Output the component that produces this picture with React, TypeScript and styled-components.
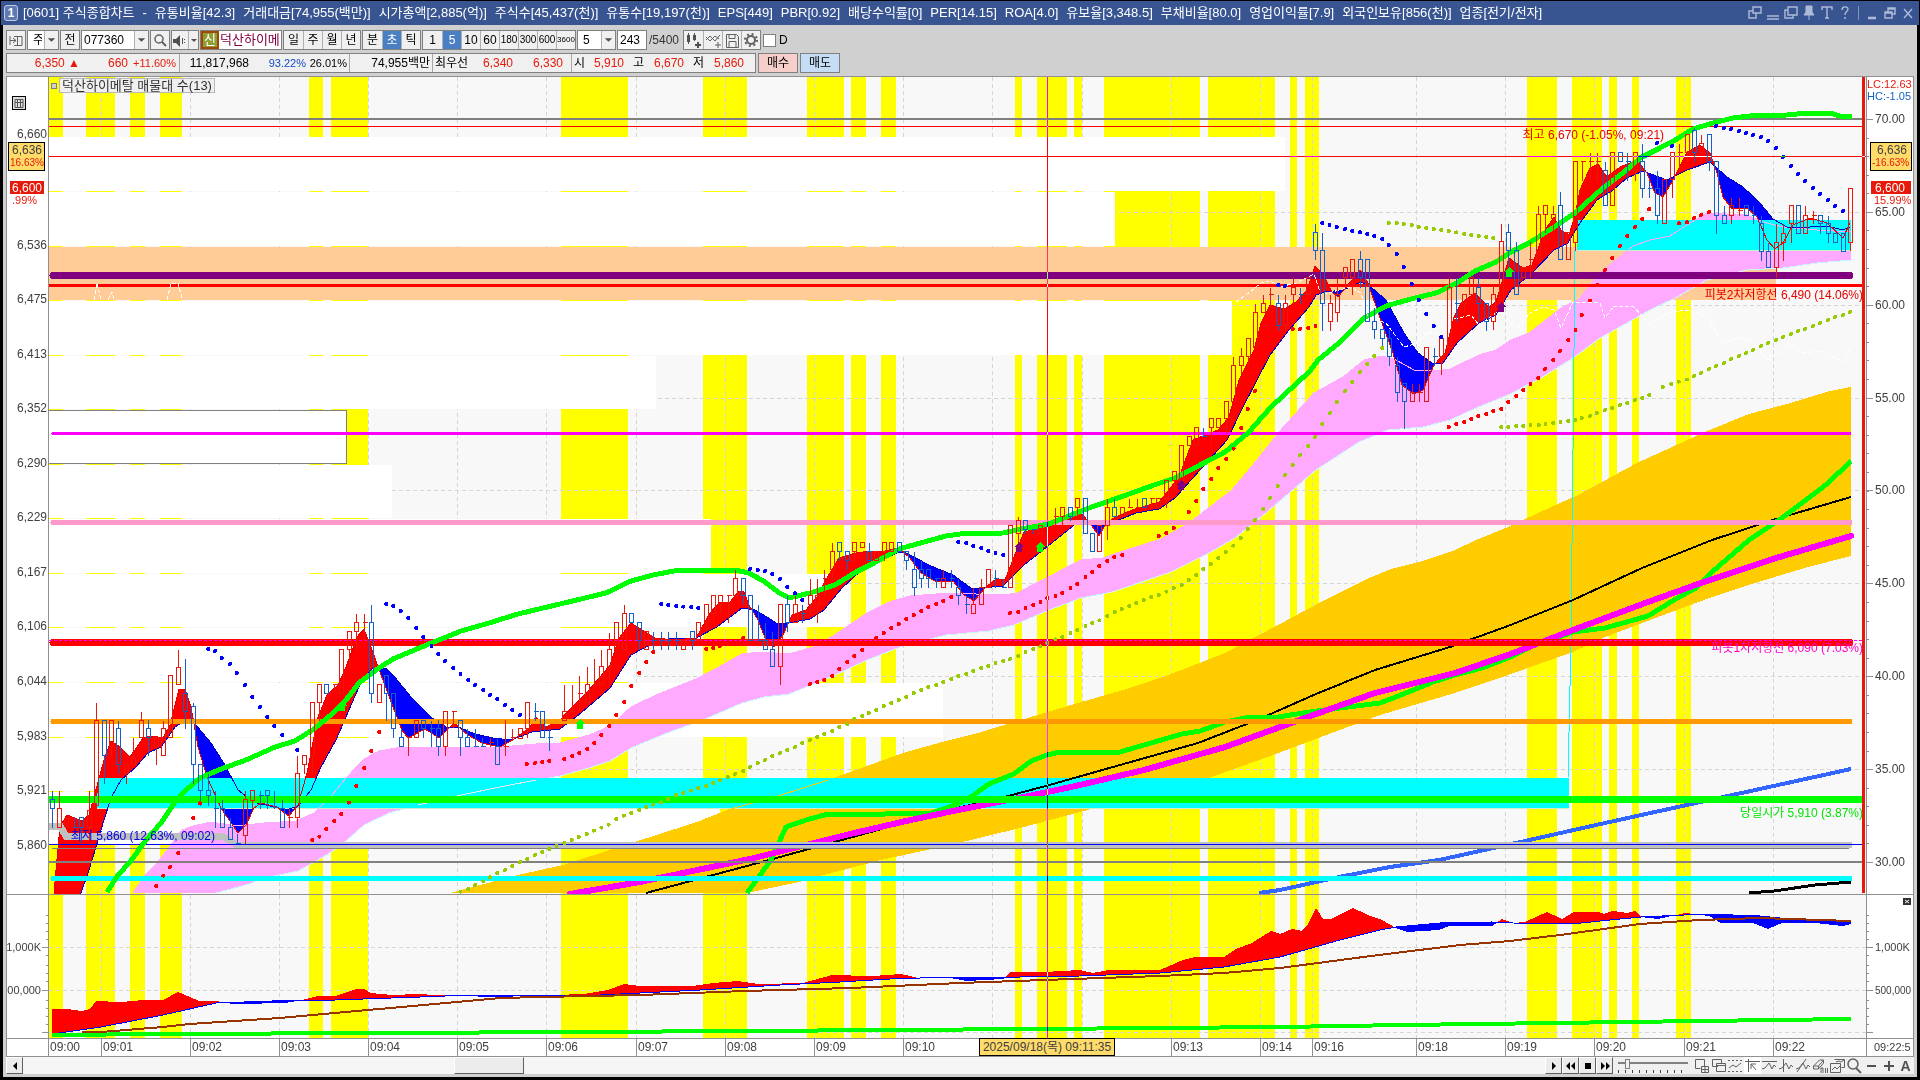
import React from "react";
import styled, { createGlobalStyle } from "styled-components";

const FONT = '"Liberation Sans", "Noto Sans CJK KR", sans-serif';

const GlobalStyle = createGlobalStyle`
  * { box-sizing: border-box; }
  body { margin: 0; background: #000; font-family: ${FONT}; font-size: 12px; color: #000; }
  button, input, select { font-family: inherit; font-size: inherit; color: inherit; margin: 0; }
`;

/* ---------- series data ---------- */

type Pt = [number, number];
const pairs = (s: string): Pt[] =>
  s.trim().split(/\s+/).map((p) => p.split(",").map(Number) as Pt);
const poly = (s: string) => s.trim();

const STRIPES: Pt[] = pairs(`49,63 86,115 130,145 160,182 309,323 331,368 561,628 703,747 807,844 851,866
  881,896 1015,1022 1037,1067 1074,1082 1104,1200 1208,1275 1290,1297 1305,1319 1527,1557 1572,1602
  1609,1617 1632,1639 1676,1691`);
const MINUTES = [101, 190, 279, 368, 457, 546, 636, 725, 814, 903, 992, 1082, 1171, 1260, 1312, 1416, 1505, 1594, 1684, 1773];
const LEVELS = [119, 212, 305, 398, 490, 583, 676, 769, 862];

/* volume profile rows: top, bottom, right edge */
const PROFILE = [
  [137, 191, 1285], [192, 246, 1115], [301, 355, 1232], [356, 409, 656], [465, 518, 392],
  [519, 573, 711], [574, 627, 848], [628, 682, 633], [683, 737, 943], [738, 791, 518], [792, 845, 720],
];

const UPPER_GREEN = `107,892 118,875 130,862 146,840 161,823 175,802 186,790 200,778 221,769 246,760 275,747 295,741
 314,729 332,714 346,700 359,683 379,668 393,659 429,644 461,631 489,623 518,614 560,604 585,598 606,593 631,581
 653,575 674,571 703,570 735,570 749,573 765,582 778,592 789,598 810,593 835,585 856,572 874,563 899,549 924,542
 946,536 960,534 1003,533 1021,529 1049,524 1074,514 1089,508 1129,494 1154,485 1175,478 1204,463 1225,452
 1248,433 1271,407 1309,372 1318,360 1339,343 1364,318 1386,306 1411,299 1436,293 1457,283 1475,271 1496,262
 1511,252 1529,243 1554,227 1575,213 1603,188 1623,173 1640,158 1660,148 1677,139 1693,129 1713,123 1733,118
 1750,116 1787,115 1807,113 1830,113 1840,116 1852,117`;
const LOWER_GREEN = `747,893 771,860 786,827 806,820 828,814 861,815 910,813 931,813 953,806 971,797 989,784 1014,774
 1031,761 1047,755 1060,752 1120,752 1144,745 1182,734 1200,731 1225,722 1251,717 1278,717 1310,712 1348,707
 1380,703 1401,695 1433,682 1455,675 1482,668 1508,658 1535,645 1573,632 1605,628 1648,616 1674,600 1696,588
 1712,572 1749,540 1782,518 1827,484 1851,461`;
const GOLD = `450,893 518,875 563,865 703,820 731,809 778,796 828,780 864,767 903,753 942,742 978,733 1024,719 1071,705
 1123,690 1171,674 1225,653 1278,625 1321,602 1369,578 1391,569 1423,561 1455,550 1476,540 1508,527 1551,507
 1578,495 1637,463 1707,431 1749,414 1787,404 1830,391 1851,387 1851,556 1808,567 1755,583 1712,597 1658,617
 1605,637 1573,652 1508,675 1455,693 1380,715 1321,737 1273,755 1209,778 1144,795 1080,812 1020,828 950,845
 881,860 820,876 799,882 747,893`;
const PINK_TOP = `133,893 145,875 157,863 182,830 193,826 211,822 236,826 264,823 296,821 314,813 332,795 346,778
 364,759 379,751 396,748 446,747 500,747 536,744 560,743 589,735 610,726 631,707 656,695 696,679 717,668 742,654
 760,652 789,654 817,646 839,632 867,613 889,602 910,596 949,593 1003,595 1017,593 1046,578 1081,560 1103,558
 1120,552 1161,539 1189,523 1232,490 1257,460 1279,432 1314,393 1343,377 1364,360 1382,356 1396,360 1414,370
 1436,371 1450,369 1479,355 1496,350 1511,340 1529,333 1561,308 1579,299 1600,273 1633,246 1650,240 1670,236
 1690,223 1707,213 1727,214 1747,215 1763,222 1783,227 1817,230 1851,232`;
const PINK_BOTTOM = `216,893 249,884 265,878 298,871 318,860 339,847 364,825 389,813 418,805 461,795 500,787 560,776
 589,768 610,761 631,748 667,733 703,720 742,703 764,697 789,694 831,677 867,660 903,646 946,635 989,631 1014,625
 1049,610 1081,598 1112,592 1171,572 1209,553 1235,538 1267,512 1316,470 1359,442 1388,430 1423,427 1450,420
 1476,408 1508,395 1541,378 1573,358 1600,338 1650,310 1677,297 1707,280 1747,270 1783,268 1817,263 1851,260`;
const BLACK_MA = `646,893 758,863 860,835 953,809 1012,795 1053,784 1120,765 1198,743 1257,720 1316,694 1375,670
 1450,647 1508,626 1573,600 1642,568 1712,540 1776,519 1851,497`;
const MAGENTA_MA = `570,894 640,882 750,859 850,834 906,821 953,811 1024,797 1080,785 1144,770 1225,747 1305,718
 1375,693 1455,673 1508,655 1573,630 1648,602 1701,583 1776,558 1851,536`;

const FAST = `54,893 59,837 62,823 67,815 82,821 89,815 95,793 104,760 111,741 120,747 130,757 143,738 152,736 163,738
 170,725 179,689 185,689 191,707 198,747 207,777 221,808 238,833 246,825 254,808 261,803 277,807 289,816 298,805
 307,773 318,717 327,695 338,685 346,667 357,637 364,629 371,647 380,672 393,707 402,730 408,738 425,729 439,738
 454,723 468,735 482,743 500,747 514,739 529,728 536,717 546,727 560,720 571,708 589,690 610,665 619,638 631,623
 642,630 655,638 674,640 696,638 710,613 719,603 730,602 739,591 744,592 749,605 758,620 767,643 774,647 783,635
 792,615 806,610 817,597 824,583 839,558 856,553 871,551 881,552 899,548 910,558 921,573 935,581 953,581 964,595
 974,601 985,588 996,579 1005,580 1014,557 1024,532 1039,528 1060,518 1078,510 1089,522 1099,536 1106,523 1114,518
 1132,510 1159,502 1179,477 1193,440 1218,430 1229,417 1239,380 1254,350 1261,323 1270,305 1284,309 1296,302
 1307,290 1315,266 1323,274 1332,292 1338,297 1346,287 1360,270 1368,283 1379,315 1393,353 1402,385 1414,394
 1423,390 1434,365 1445,353 1454,317 1461,303 1475,293 1489,307 1496,302 1509,258 1523,268 1532,265 1545,230
 1554,217 1561,230 1569,235 1575,215 1580,190 1590,168 1598,164 1607,177 1620,167 1637,160 1647,173 1655,193
 1663,197 1673,180 1687,152 1700,145 1710,153 1717,173 1723,197 1732,209 1747,208 1757,217 1767,240 1775,249
 1783,243 1793,225 1810,218 1827,223 1843,238 1850,223`;
const SLOW = `54,960 81,893 89,870 96,847 104,820 111,798 121,780 136,767 148,753 161,747 175,727 186,720 196,725
 211,743 225,765 238,790 246,796 257,803 275,807 286,810 298,806 311,790 321,767 336,740 352,703 362,680 373,668
 386,668 393,675 411,697 432,718 446,727 461,728 475,734 493,738 511,740 532,732 560,729 581,713 610,688 631,655
 655,642 674,638 696,638 717,627 742,608 755,610 767,617 776,623 789,623 810,619 824,610 842,588 864,568 899,552
 906,553 931,566 953,575 971,588 981,588 1003,586 1024,565 1053,542 1078,522 1089,521 1099,524 1111,523 1136,513
 1159,509 1175,498 1200,470 1227,440 1243,407 1257,380 1270,355 1289,330 1309,307 1316,295 1325,292 1343,290
 1361,282 1371,287 1386,300 1404,333 1418,353 1432,363 1443,363 1457,343 1479,323 1496,315 1511,290 1532,273
 1554,250 1568,243 1580,223 1597,200 1613,190 1627,178 1643,171 1667,180 1687,170 1710,162 1727,177 1743,187
 1760,203 1773,219 1787,227 1810,227 1827,226 1843,230 1850,227`;

const VOL_FAST = `52,1009 67,1009 82,1011 90,1009 96,1001 122,1002 143,1000 163,1000 178,992 199,1001 216,1001 233,1004
 286,1003 302,1000 318,996 335,996 357,989 364,989 371,993 392,995 416,994 461,996 498,997 527,996 551,995 584,994
 608,990 624,984 640,986 693,986 713,983 738,981 758,984 803,983 832,975 873,976 901,974 918,978 950,978 967,981
 1003,979 1011,972 1044,972 1079,970 1093,973 1109,970 1160,970 1183,960 1195,957 1224,957 1236,949 1252,943
 1271,931 1280,934 1292,929 1302,931 1308,924 1316,908 1323,919 1331,919 1353,908 1368,915 1382,920 1396,928
 1407,932 1439,930 1449,926 1492,926 1502,919 1513,923 1525,922 1547,912 1562,919 1574,912 1598,912 1604,914
 1613,911 1627,913 1635,911 1641,917 1658,919 1686,913 1709,916 1721,923 1753,923 1768,929 1782,923 1815,923
 1843,926 1851,924`;
const VOL_SLOW = `52,1034 101,1027 163,1015 216,1003 300,1000 335,1000 420,997 470,995 530,995 580,996 640,993 700,990
 780,985 840,982 890,979 950,977 1020,977 1080,976 1160,973 1224,967 1280,957 1340,940 1380,930 1396,927 1440,923
 1492,922 1513,923 1572,924 1600,921 1641,917 1684,915 1706,914 1760,916 1800,920 1851,922`;
const VOL_BROWN = `82,1032 101,1032 163,1027 190,1024 280,1018 368,1010 457,1002 500,998 540,997 640,995 745,991 850,988
 960,983 1044,980 1160,976 1224,973 1280,968 1371,956 1460,945 1510,941 1560,935 1640,924 1700,920 1760,918 1851,921`;
const VOL_GREEN = `52,1035 164,1034 380,1033 580,1032 744,1031 892,1030 1034,1029 1160,1028 1280,1027 1404,1025
 1554,1023 1700,1021 1851,1019`;

/* Bars are recorded in batches, each on its own grid (origin and units per pixel). */
type Grid = { x: number; y: number; sx: number; sy: number };
const GRIDS: Record<string, Grid> = {
  a: { x: 0, y: 560, sx: 2.8, sy: 3 },
  b: { x: 560, y: 480, sx: 2.8, sy: 3 },
  c: { x: 1100, y: 200, sx: 2.8, sy: 3 },
  d: { x: 1500, y: 80, sx: 3, sy: 3 },
  e: { x: 1080, y: 370, sx: 1.867, sy: 3 },
};

/* x, high, body top, body bottom, low, direction (r rising, b falling) */
const BARS: Record<string, string> = {
  a: `147,690,718,745,800,b 167,690,745,800,800,r 187,775,775,798,798,r 208,770,800,800,800,b 228,772,772,800,845,b
 250,690,750,800,840,r 270,426,481,735,735,r 292,481,481,585,668,b 312,481,481,558,585,r 332,481,505,613,640,b
 354,613,613,640,668,r 374,530,590,613,613,r 396,453,481,530,530,r 416,478,505,530,585,b 438,530,530,558,613,r
 457,481,505,586,586,r 477,346,346,530,530,r 500,267,320,373,373,r 520,294,400,453,505,b 541,426,438,613,668,b
 561,613,613,690,735,b 583,640,690,705,735,b 603,690,745,745,800,b 622,718,745,800,800,b 645,772,800,838,838,b
 665,820,850,850,850,b 687,690,718,826,850,r 707,690,690,720,745,r 729,690,705,705,745,b 749,690,690,705,745,b
 768,690,740,745,745,b 791,718,745,800,800,b 811,745,772,772,800,r 832,585,640,772,800,r 852,586,586,613,640,r
 875,426,426,586,640,r 895,373,373,426,480,r 914,373,373,400,400,b 936,373,373,373,400,r 956,267,267,400,400,r
 978,213,213,267,320,r 998,160,187,213,267,r 1020,160,187,187,240,r 1040,132,187,400,426,b 1062,373,373,426,426,r
 1082,346,346,400,480,b 1102,400,400,505,530,b 1124,505,532,558,558,b 1144,530,530,530,585,r 1166,481,481,530,530,r
 1186,481,481,505,530,b 1207,481,505,505,558,b 1227,478,505,558,585,b 1247,453,453,558,585,r 1269,453,453,453,500,r
 1289,478,481,530,585,b 1310,505,532,558,558,b 1331,505,558,558,558,b 1352,530,558,558,558,b 1372,530,545,545,558,r
 1393,535,558,613,613,b 1415,478,558,558,585,r 1435,505,530,530,540,r 1457,505,505,535,535,r 1477,426,426,505,530,r
 1500,426,453,453,480,b 1519,453,453,532,532,b 1539,505,530,530,570,b`,
  b: `12,613,693,720,720,r 34,613,693,693,693,r 55,585,640,640,690,r 76,558,613,667,667,r 96,535,613,613,613,r
 117,507,558,613,613,r 138,455,507,558,613,r 158,427,427,507,507,r 180,373,400,507,507,r 201,400,400,427,427,b
 223,427,427,480,507,b 242,453,453,507,507,r 262,453,480,480,507,b 284,453,480,480,507,b 303,453,480,480,507,b
 325,453,480,480,507,b 345,480,480,507,507,r 370,453,453,480,507,b 388,427,427,480,480,r 410,373,373,427,453,r
 430,346,346,400,427,r 450,346,346,373,400,r 472,346,346,346,427,r 491,267,294,346,346,r 514,294,294,346,373,b
 533,346,346,480,480,b 555,373,480,480,480,b 575,427,480,507,507,b 595,453,507,558,558,b 617,373,373,558,613,r
 637,346,373,427,453,b 660,346,373,427,427,r 679,373,400,400,427,b 701,294,346,373,400,r 720,294,346,373,427,r
 740,267,294,294,346,r 762,187,213,267,294,r 783,187,187,213,240,b 805,213,213,240,267,b 825,187,187,213,240,r
 847,187,187,202,202,r 867,187,213,240,240,b 887,213,213,240,240,r 909,187,187,213,240,r 928,187,187,213,213,r
 951,187,187,213,213,b 970,213,213,240,267,b 993,213,267,322,346,b 1012,240,267,294,322,b 1032,267,267,294,322,b
 1055,294,294,294,322,b 1074,267,294,322,322,r 1096,267,294,294,322,b 1116,294,322,346,373,b 1138,346,373,373,400,b
 1158,322,373,400,400,r 1180,294,322,373,373,r 1200,267,267,322,322,r 1219,267,294,294,322,b 1241,294,322,322,322,b
 1261,136,136,322,322,r 1284,108,121,160,187,r 1303,121,121,148,160,b 1325,148,148,148,160,b 1345,136,136,160,160,r
 1387,82,108,108,136,r 1407,82,82,108,136,r 1429,82,82,108,121,b 1449,54,54,82,108,r 1471,54,54,160,160,b
 1491,160,160,213,213,b 1511,136,136,213,213,r`,
  c: `21,895,922,975,1018,r 41,895,922,948,948,b 63,922,922,948,948,r 82,895,922,922,922,r 104,895,922,922,922,r
 125,895,895,922,922,b 145,895,895,895,920,r 165,895,895,922,922,r 187,840,840,895,922,r 209,814,814,840,870,r
 228,736,736,840,840,r 250,709,709,736,736,r 270,682,682,736,736,r 290,682,709,709,709,b 312,655,655,682,736,r
 332,655,655,682,682,r 354,602,602,655,700,r 374,469,496,602,602,r 396,442,469,496,520,r 416,415,415,469,496,r
 435,310,337,442,442,r 458,283,310,337,337,r 478,262,283,283,320,r 500,283,310,376,390,b 519,283,310,376,390,r
 541,230,262,283,310,r 561,262,283,283,310,b 584,230,230,283,283,r 603,70,97,151,178,b 623,97,151,310,390,b
 645,283,310,364,390,r 664,230,283,337,364,r 687,202,202,230,262,r 707,178,178,230,283,r 729,151,178,230,262,b
 749,178,178,364,364,b 768,320,364,388,415,b 791,388,388,415,440,b 810,388,415,469,496,b 833,469,496,577,602,b
 852,550,550,602,684,b 875,550,577,602,602,r 894,550,577,577,602,r 914,442,442,602,602,r 936,442,469,469,496,b
 956,415,415,469,523,r 978,230,262,442,442,r 998,230,310,310,364,b 1020,283,283,310,337,r 1041,230,230,283,283,r
 1061,230,262,310,364,b 1082,310,310,364,390,b 1102,256,283,364,388,r 1124,70,124,310,310,r 1144,70,97,151,202,b
 1166,124,151,283,283,b 1185,202,202,230,230,r 1205,124,178,178,230,r 1228,16,43,178,178,r 1247,16,16,43,97,r
 1270,16,43,55,97,r 1289,-27,16,178,178,b 1312,97,97,178,178,r`,
  d: `226,243,243,485,510,r 248,243,243,243,300,r 271,216,243,243,300,r 292,216,243,243,300,r 316,243,270,376,376,b
 338,216,216,376,376,r 361,216,216,243,243,b 382,216,243,243,300,b 406,216,216,270,300,r 428,190,243,325,352,b
 449,300,325,325,352,b 472,270,325,404,430,b 493,298,298,430,430,r 517,216,216,298,352,r 538,190,216,216,270,r
 562,163,163,216,243,r 583,141,151,216,243,b 604,163,190,216,243,r 628,163,163,243,270,b 649,243,243,404,458,b
 673,376,404,430,430,b 694,352,376,404,430,r 717,352,390,390,404,r 740,376,376,404,404,b 760,376,404,404,430,b
 784,404,430,512,540,b 805,485,512,562,562,b 829,430,485,562,590,r 850,430,458,485,540,r 874,376,376,430,485,r
 895,376,376,458,458,b 916,376,404,458,458,r 940,390,404,404,430,r 961,404,404,430,458,b 985,404,430,458,485,b
 1006,458,458,485,485,b 1030,458,458,512,512,b 1052,325,325,485,510,r`,
};

const DOTS: { grid: string; color: string; at: string }[] = [
  { grid: "a", color: "#0000ff", at: `583,267 602,273 621,294 644,312 663,339 686,375 706,411 728,441 748,471 768,498 790,525
 832,570 1081,132 1101,138 1122,153 1143,174 1165,204 1185,231 1208,258 1227,282 1246,303 1269,324 1289,342 1311,360
 1330,375 1353,390 1372,405 1392,417 1414,435 1434,450 1456,465` },
  { grid: "a", color: "#ff0000", at: `437,978 457,947 476,921 499,879 541,774 560,730 874,840 894,830 913,807 936,783 955,762
 977,728 997,678 1020,624 1039,573 1062,516 1475,612 1498,609 1518,606 1538,603` },
  { grid: "a", color: "#99cc00", at: `1289,995 1311,987 1330,975 1353,964 1372,952 1392,939 1414,930 1434,918 1456,906 1476,897
 1498,885 1518,876 1538,867 1558,858 1580,849 1601,840 1621,831 1643,822 1663,812 1684,803 1704,794` },
  { grid: "b", color: "#0000ff", at: `283,372 303,375 325,378 345,380 367,381 387,384 532,267 554,270 574,273 594,282 616,297
 636,321 658,340 678,360 1115,186 1137,189 1157,198 1179,204 1199,213 1219,219 1241,225` },
  { grid: "b", color: "#ff0000", at: `12,837 34,828 54,819 76,807 96,789 115,765 138,738 157,705 180,666 199,618 222,579 241,546
 261,516 409,507 429,504 448,498 513,474 700,612 720,606 740,600 762,588 782,567 804,546 824,528 846,510 885,474
 907,459 927,444 949,432 969,417 991,405 1011,393 1031,381 1053,372 1073,363 1095,351 1260,399 1283,396 1303,384
 1325,375 1345,366 1364,354 1387,348 1406,339 1429,324 1448,312 1471,291 1490,276 1510,258 1532,243 1552,231 1574,225` },
  { grid: "b", color: "#99cc00", at: `157,1017 179,1007 199,999 222,990 241,981 261,974 283,967 303,957 325,945 345,939 367,932
 387,924 409,918 429,909 448,901 470,891 490,882 513,873 532,861 554,849 574,840 594,828 616,819 636,810 658,801
 678,789 700,780 720,771 740,762 762,753 782,741 804,732 824,717 846,708 865,699 885,690 907,678 927,669 949,660
 969,651 991,639 1011,630 1031,621 1053,615 1073,606 1095,597 1115,588 1137,582 1157,573 1179,564 1199,558 1219,549
 1241,543 1260,537 1283,528 1303,516 1325,507 1345,499 1364,489 1387,478 1406,471 1429,459 1448,450 1471,438
 1490,429 1510,421 1532,408` },
  { grid: "e", color: "#99cc00", at: `65,726 78,717 92,708 105,699 119,690 133,681 147,675 161,665 175,654 190,645 203,630
 217,615 230,597 244,582 258,564 272,546 286,527 1088,51 1104,42 1118,35` },
  { grid: "c", color: "#99cc00", at: `394,1014 414,987 434,960 457,927 476,894 498,858 518,825 540,795 560,765 583,738 602,711
 622,672 644,639 663,606 686,573 706,546 728,516 748,492 768,468 790,444 809,69 831,69 851,72 873,75 893,81 913,84
 935,87 955,90 977,93 997,97 1020,102 1039,105 1061,108 1081,111 1101,114 1123,681 1143,681 1165,678 1185,678
 1205,675 1229,675 1247,672 1269,669 1289,666 1311,663 1331,660 1349,654 1372,648 1391,639 1414,630 1434,624
 1456,615 1476,609 1498,600 1518,594 1538,585` },
  { grid: "c", color: "#ff0000", at: `165,1008 185,999 207,984 249,936 269,903 289,867 311,837 331,804 353,777 374,746 395,684
 414,627 434,573 540,387 560,387 583,384 603,378 977,681 997,672 1020,666 1039,657 1059,648 1081,642 1101,633
 1123,627 1143,606 1165,588 1185,570 1205,552 1227,534 1246,507 1269,480 1288,453 1311,420 1331,390 1349,345
 1372,302 1392,254 1414,210 1434,174 1456,138 1476,108 1498,81 1518,57 1538,27` },
  { grid: "c", color: "#0000ff", at: `499,255 518,258 622,69 643,75 663,81 686,87 706,93 728,97 748,102 768,108 790,117 809,135
 831,162 851,201 873,252 893,300 913,342 935,378 955,411` },
  { grid: "d", color: "#0000ff", at: `471,189 516,198 648,138 672,144 693,147 717,153 738,159 759,165 783,171 804,183 828,204
 849,231 873,258 894,282 915,303 939,324 960,342 984,360 1005,378 1029,393` },
  { grid: "d", color: "#ff0000", at: `447,387 537,430 561,427 582,414 603,405 627,396` },
  { grid: "d", color: "#99cc00", at: `561,899 582,888 603,879 627,867 648,858 672,849 693,837 717,828 738,819 759,810 783,798
 804,789 828,780 849,771 873,762 894,753 915,747 939,738 960,729 984,720 1005,711 1029,705 1050,696` },
];

const SIGNALS = [
  { x: 342, y: 706, c: "#00ff00" }, { x: 580, y: 724, c: "#00ff00" }, { x: 1040, y: 547, c: "#00ff00" },
  { x: 1509, y: 272, c: "#00ff00" }, { x: 1019, y: 547, c: "#800080" }, { x: 1181, y: 485, c: "#800080" },
  { x: 1501, y: 307, c: "#800080" },
];

/* Split the space between two lines into the part where the first is above and where it is below. */
function ribbon(fastText: string, slowText: string) {
  const fast = pairs(fastText);
  const slow = pairs(slowText);
  const at = (s: Pt[], x: number) => {
    let i = 1;
    while (i < s.length - 1 && s[i][0] < x) i++;
    const [x0, y0] = s[i - 1];
    const [x1, y1] = s[i];
    return y0 + ((y1 - y0) * (x - x0)) / (x1 - x0);
  };
  const up: string[] = [];
  const down: string[] = [];
  const base: string[] = [];
  const end = fast[fast.length - 1][0];
  for (let x = fast[0][0]; x <= end; x += 1) {
    const f = at(fast, x);
    const s = at(slow, x);
    up.push(`${x},${Math.min(f, s).toFixed(1)}`);
    down.push(`${x},${Math.max(f, s).toFixed(1)}`);
    base.unshift(`${x},${s.toFixed(1)}`);
  }
  return { up: [...up, ...base].join(" "), down: [...down, ...base].join(" ") };
}
const PRICE_RIBBON = ribbon(FAST, SLOW);
const VOLUME_RIBBON = ribbon(VOL_FAST, VOL_SLOW);
const PINK_AREA = [...pairs(PINK_TOP), ...pairs(PINK_BOTTOM).reverse()].map((p) => p.join(",")).join(" ");

/* ---------- page frame ---------- */

const Window = styled.main`
  display: flex;
  flex-direction: column;
  height: 100vh;
  min-height: 600px;
  background: #000;
  padding: 1px 1px 3px;
  overflow: hidden;
`;
const TitleBar = styled.header`
  display: flex;
  align-items: center;
  height: 24px;
  flex: none;
  padding: 0 3px;
  background: #385592;
  color: #fff;
`;
const WindowNo = styled.span`
  width: 14px;
  height: 16px;
  border: 1px solid #c3cde2;
  border-radius: 3px;
  background: #5f79b3;
  font-weight: bold;
  line-height: 14px;
  text-align: center;
`;
const Title = styled.h1`
  display: flex;
  flex: 1;
  gap: 8px;
  margin: 0 0 0 5px;
  font-size: 13px;
  line-height: 20px;
  font-weight: normal;
  white-space: nowrap;
  overflow: hidden;
`;
const TitleTools = styled.div`
  display: flex;
  align-items: center;
  gap: 2px;
`;
const TitleButton = styled.button`
  width: 16px;
  height: 18px;
  padding: 0;
  border: 0;
  background: none;
  svg { display: block; }
`;
const TitleRule = styled.span`
  width: 1px;
  height: 14px;
  margin: 0 3px;
  background: #8292b8;
`;
const Body = styled.div`
  display: flex;
  flex-direction: column;
  flex: 1;
  min-height: 0;
  margin: 0 2px;
  padding: 0 0 3px 3px;
  background: #d0d0d0;
`;

/* ---------- toolbar ---------- */

const Toolbar = styled.div`
  display: flex;
  align-items: center;
  height: 28px;
  padding-top: 2px;
  flex: none;
  gap: 1px;
  font-size: 12px;
`;
const Group = styled.div`
  display: flex;
  height: 20px;
  border: 1px solid #808080;
  background: #f0f0f0;
`;
const Key = styled.button<{ $on?: boolean; $w?: number; $size?: number }>`
  width: ${(p) => p.$w ?? 19}px;
  height: 18px;
  padding: 0;
  border: 0;
  border-left: 1px solid #b0b0b0;
  background: ${(p) => (p.$on ? "#4a7fc4" : "#f0f0f0")};
  color: ${(p) => (p.$on ? "#fff" : "#000")};
  font-size: ${(p) => p.$size ?? 12}px;
  line-height: 18px;
  text-align: center;
  white-space: nowrap;
  &:first-child { border-left: 0; }
  svg { display: block; margin: 0 auto; }
`;
const Field = styled.div<{ $w: number }>`
  display: flex;
  width: ${(p) => p.$w}px;
  height: 20px;
  border: 1px solid #808080;
  background: #fff;
  input, select {
    flex: 1;
    min-width: 0;
    height: 18px;
    padding: 0 2px;
    border: 0;
    outline: 0;
    background: none;
    appearance: none;
  }
  select { padding-left: 5px; }
  svg { flex: none; border-left: 1px solid #b0b0b0; background: #f0f0f0; }
`;
const StockName = styled.div`
  display: flex;
  width: 82px;
  height: 20px;
  border: 1px solid #808080;
  background: #fff;
  color: #800040;
  font-size: 13px;
  line-height: 18px;
  white-space: nowrap;
`;
const Badge = styled.span`
  flex: none;
  width: 18px;
  margin-right: 1px;
  border: 2px solid #a04808;
  background: #8f9e32;
  color: #fff;
  line-height: 14px;
  text-align: center;
`;
const Total = styled.span`
  width: 34px;
  padding-left: 1px;
  color: #333;
`;
const Check = styled.label`
  display: flex;
  align-items: center;
  gap: 3px;
  margin-left: 1px;
  input {
    appearance: none;
    width: 13px;
    height: 13px;
    border: 1px solid #808080;
    background: #fff;
  }
`;

const InfoBar = styled.div`
  display: flex;
  height: 20px;
  flex: none;
  gap: 2px;
`;
const Quotes = styled.div`
  display: flex;
  width: 750px;
  border: 1px solid #808080;
  background: #f0f0f0;
  line-height: 18px;
  white-space: nowrap;
`;
const QuoteCell = styled.div<{ $w: number }>`
  display: flex;
  width: ${(p) => p.$w}px;
  border-left: 1px solid #a8a8a8;
  &:first-child { border-left: 0; }
`;
const Value = styled.span<{ $w: number; $tone?: "up" | "down"; $left?: boolean; $small?: boolean }>`
  width: ${(p) => p.$w}px;
  font-size: ${(p) => (p.$small ? 11 : 12)}px;
  text-align: ${(p) => (p.$left ? "left" : "right")};
  padding-left: ${(p) => (p.$left ? 2 : 0)}px;
  color: ${(p) => (p.$tone === "up" ? "#e6190a" : p.$tone === "down" ? "#1448c8" : "#000")};
`;
const Trade = styled.button<{ $buy?: boolean }>`
  width: 40px;
  padding: 0;
  border: 1px solid #808080;
  background: ${(p) => (p.$buy ? "#f6cfca" : "#c5ddf5")};
  line-height: 16px;
`;

/* ---------- chart ---------- */

const ChartFrame = styled.section`
  display: flex;
  flex-direction: column;
  flex: 1;
  min-height: 0;
  margin: 3px 3px 0 0;
  border: 1px solid #909090;
  border-bottom: 0;
  background: #fff;
`;
/* The 1px rule below a pane is outside its share of the height. */
const Pane = styled.div<{ $grow: number }>`
  display: grid;
  grid-template-columns: 41px minmax(0, 1fr) 46px;
  grid-template-rows: minmax(0, 1fr);
  flex: ${(p) => p.$grow} 1 0;
  min-height: 0;
  border-bottom: 1px solid #909090;
`;
const AxisSvg = styled.svg`
  display: block;
  width: 100%;
  height: 100%;
  font-family: ${FONT};
  font-size: 12px;
  fill: #404040;
  .mid { font-size: 11px; }
  .low { font-size: 10px; }
`;
const Plot = styled.div`
  position: relative;
  min-width: 0;
  border-left: 1px solid #909090;
  border-right: 1px solid #909090;
  background: #f8f8f8;
  overflow: hidden;
`;
const PlotSvg = styled.svg`
  position: absolute;
  inset: 0;
  width: 100%;
  height: 100%;
`;
const Crosshair = styled.svg`
  position: absolute;
  inset: 0;
  width: 100%;
  height: 100%;
  mix-blend-mode: difference;
`;
const Legend = styled.div`
  position: absolute;
  left: 2px;
  top: 1px;
  display: flex;
  align-items: center;
  gap: 2px;
  height: 15px;
  font-size: 13px;
  line-height: 13px;
  color: #303030;
  i { width: 6px; height: 6px; border: 1px solid #808080; background: #d0d0d0; }
  span { padding: 0 2px; border: 1px solid #b8b8b8; background: #f0f0f0; }
`;
const Note = styled.div<{ $top: number; $left?: number; $color: string }>`
  position: absolute;
  top: ${(p) => p.$top}%;
  ${(p) => (p.$left !== undefined ? `left: ${p.$left}%;` : "right: 3px;")}
  color: ${(p) => p.$color};
  line-height: 14px;
  white-space: nowrap;
`;
const TimeAxis = styled.div`
  position: relative;
  display: flex;
  height: 18px;
  flex: none;
  padding-left: 41px;
  border-bottom: 1px solid #909090;
  color: #404040;
  line-height: 16px;
`;
const Tick = styled.span<{ $span: number }>`
  flex: ${(p) => p.$span - 2} 1 0;
  min-width: 0;
  padding-left: 1px;
  border-left: 1px solid #909090;
  white-space: nowrap;
`;
const LastTick = styled.span`
  flex: 0 0 47px;
  padding-left: 7px;
  border-left: 1px solid #909090;
  font-size: 11px;
`;
const TimeTip = styled.span`
  position: absolute;
  top: -1px;
  left: 51%;
  width: 136px;
  height: 18px;
  border: 1px solid #000;
  background: #ffdb69;
  text-align: center;
  white-space: nowrap;
`;

/* ---------- scroll bar and drawing tools ---------- */

const Bottom = styled.footer`
  display: flex;
  align-items: stretch;
  height: 17px;
  flex: none;
  margin-right: 3px;
  background: #f0f0f0;
`;
const Bevel = styled.button`
  flex: none;
  width: 17px;
  padding: 0;
  border: 1px solid;
  border-color: #fff #606060 #606060 #fff;
  background: #ececec;
  svg { display: block; margin: 0 auto; }
`;
const Track = styled.div`
  display: flex;
  flex: 1;
  background: #f6f6f6;
`;
const Gap = styled.span<{ $grow: number }>`
  flex: ${(p) => p.$grow} 1 0;
`;
const Thumb = styled.span`
  flex: 68 1 0;
  border: 1px solid;
  border-color: #fff #606060 #606060 #fff;
  background: #ececec;
`;
const Speed = styled.label`
  display: flex;
  flex-direction: column;
  width: 80px;
  padding: 2px 5px 0;
  input {
    appearance: none;
    width: 100%;
    height: 10px;
    margin: 0;
    background: linear-gradient(#808080, #808080) 0 3px / 100% 2px no-repeat;
  }
  input::-webkit-slider-thumb {
    appearance: none;
    width: 5px;
    height: 10px;
    border: 1px solid #808080;
    background: #f0f0f0;
  }
`;
const SpeedMarks = styled.span`
  height: 3px;
  margin-top: 1px;
  background: repeating-linear-gradient(90deg, #404040 0 1px, transparent 1px 7px);
`;
const Tool = styled.button<{ $on?: boolean }>`
  flex: none;
  width: 17px;
  padding: 0;
  border: 0;
  background: ${(p) => (p.$on ? "#fff" : "none")};
  font-size: 14px;
  color: #505050;
  svg { display: block; }
`;

const Arrow = () => (
  <svg width="14" height="18" viewBox="0 0 14 18" aria-hidden="true"><path d="M3 7h8l-4 4z" fill="#505050" /></svg>
);
const Glyph = ({ d, fill }: { d: string; fill?: string }) => (
  <svg width="17" height="17" viewBox="0 0 17 17" fill={fill ?? "none"} stroke={fill ? "none" : "#606060"} strokeWidth="1" aria-hidden="true">
    <path d={d} />
  </svg>
);
const TGlyph = ({ d, solid }: { d: string; solid?: boolean }) => (
  <svg width="16" height="18" viewBox="0 0 16 18" fill={solid ? "#aebbd8" : "none"} stroke="#aebbd8" strokeWidth={solid ? 1 : 1.4} aria-hidden="true">
    <path d={d} />
  </svg>
);

const UP = "#e6190a";
const DOWN = "#1560c8";

function Bars() {
  const out: React.ReactNode[] = [];
  Object.entries(BARS).forEach(([k, text]) => {
    const g = GRIDS[k];
    text.trim().split(/\s+/).forEach((item, i) => {
      const f = item.split(",");
      const x = Math.round(g.x + Number(f[0]) / g.sx - 0.5) + 0.5;
      const [hi, top, bot, lo] = f.slice(1, 5).map((v) => Math.round(g.y + Number(v) / g.sy) + 0.5);
      const d =
        bot - top < 2
          ? `M${x} ${hi}V${lo}M${x - 2} ${top}H${x + 3}`
          : `M${x} ${hi}V${top}M${x} ${bot}V${lo}M${x - 2} ${top}H${x + 2}V${bot}H${x - 2}Z`;
      out.push(<path key={k + i} d={d} stroke={f[5] === "r" ? UP : DOWN} />);
    });
  });
  return <g fill="none" strokeWidth="1">{out}</g>;
}

function Backdrop({ top, bottom, levels }: { top: number; bottom: number; levels: number[] }) {
  return (
    <>
      <rect x="49" y={top} width="1818" height={bottom - top} fill="#f8f8f8" />
      {STRIPES.map(([a, b]) => <rect key={a} x={a} y={top} width={b - a} height={bottom - top} fill="#ffff00" />)}
      <g stroke="#d6d6d6" strokeWidth="1" strokeDasharray="4 3">
        {MINUTES.map((x) => <path key={x} d={`M${x + 0.5} ${top}V${bottom}`} />)}
        {levels.map((y) => <path key={y} d={`M49 ${y + 0.5}H1867`} />)}
      </g>
    </>
  );
}

function PricePlot() {
  return (
    <PlotSvg viewBox="49 77 1817 817" preserveAspectRatio="none" shapeRendering="crispEdges" role="img" aria-label="덕산하이메탈 5초 차트">
      <Backdrop top={77} bottom={894} levels={LEVELS} />
      {PROFILE.map(([t, b, r]) => <rect key={t} x="49" y={t} width={r - 49} height={b - t} fill="#fff" />)}
      <rect x="48.5" y="410.5" width="298" height="53" fill="#fff" stroke="#808080" />
      <rect x="49" y="247" width="1727" height="53" fill="#ffcb97" />
      <polygon points={poly(GOLD)} fill="#ffcc00" />
      <polygon points={PINK_AREA} fill="#ffaaff" />
      <polyline points={PINK_BOTTOM} fill="none" stroke="#ccf5ff" />
      <polygon points={PRICE_RIBBON.up} fill="#ff0000" />
      <polygon points={PRICE_RIBBON.down} fill="#0000ff" />

      <g fill="#00ffff">
        <polygon points="98,778 1569,778 1569,808 97,808" />
        <rect x="1577" y="220" width="274" height="30" />
      </g>
      <path d="M97 808.5H1569M1577 250.5H1851" stroke="#ccf0c8" />
      <polyline points="1575,250 1573,450 1571,640 1568,778" fill="none" stroke="#00ffff" />
      <polyline points={PINK_TOP} fill="none" stroke="#ffaaff" />
      <polyline points="418,805 461,795 500,787 536,780" fill="none" stroke="#e8e8ff" />
      <polyline points="703,820 731,809 778,796 828,780" fill="none" stroke="#ffcc00" />

      <g fill="none" strokeLinejoin="round">
        <polyline points={SLOW} stroke="#0000c8" />
        <polyline points={FAST} stroke="#e60000" />
        <polyline points={BLACK_MA} stroke="#000" strokeWidth="2" />
        <polyline points={LOWER_GREEN} stroke="#00ff00" strokeWidth="5" />
        <polyline points={MAGENTA_MA} stroke="#ff00ff" strokeWidth="6" strokeLinecap="round" />
        <polyline points="1259,893 1280,890 1339,877 1390,867 1439,860 1525,841 1605,823 1696,803 1851,769" stroke="#3366ff" strokeWidth="4" />
        <polyline points="1749,893 1774,891 1815,885 1851,882" stroke="#000" strokeWidth="3" />
      </g>

      <g fill="none" strokeLinecap="round">
        <path d="M49 119H1862M49 862H1862" stroke="#808080" strokeWidth="2" />
        <polyline points="49,826 60,826 66,836 222,836 237,845 1849,845" stroke="#c0c0c0" strokeWidth="7" />
        <path d="M52 848.5H1849" stroke="#808080" />
        <path d="M49 844.5H1862" stroke="#0000ff" />
        <path d="M53 275.5H1850" stroke="#800080" strokeWidth="7" />
        <path d="M49 285.5H1862" stroke="#ff0000" strokeWidth="3" />
        <path d="M53 433.5H1850" stroke="#ff00ff" strokeWidth="3" />
        <path d="M53 522.5H1850" stroke="#ff99cc" strokeWidth="5" />
        <path d="M53 642.5H1850" stroke="#ff0000" strokeWidth="7" />
        <path d="M53 721.5H1850" stroke="#ff9900" strokeWidth="5" />
        <path d="M49 799.5H1862" stroke="#00ff00" strokeWidth="7" />
        <path d="M53 878.5H1850" stroke="#00ffff" strokeWidth="5" />
      </g>
      <path d="M49 640.5H1862" stroke="#ff00ff" strokeDasharray="3 2" />
      <path d="M49 126.5H1862" stroke="#ff0000" />
      <polyline points={UPPER_GREEN} fill="none" stroke="#00ff00" strokeWidth="5" strokeLinejoin="round" />

      <g fill="none" stroke="#fff" strokeDasharray="4 2">
        <path d="M94 300l3-17 4 17M108 300l4-8 2 8M167 300l4-17 7 0 4 15" />
        <polyline points="1236,302 1250,292 1261,283 1271,281 1279,287 1296,283 1314,274 1321,295 1350,287 1361,293 1368,317 1386,323 1404,347 1418,343 1427,332 1443,335 1450,320 1471,315 1479,325 1500,310 1516,330 1530,313 1543,307 1554,310 1561,328 1573,302 1600,303 1605,318 1614,306 1634,307 1650,325 1667,313 1687,310 1708,317 1722,343 1740,338 1753,342 1768,360 1790,345 1803,353 1820,351 1843,362 1851,347" />
      </g>

      <Bars />
      <g>
        {DOTS.map((set, n) =>
          pairs(set.at).map(([px, py], i) => {
            const g = GRIDS[set.grid];
            return (
              <circle key={`${n}-${i}`} cx={g.x + px / g.sx} cy={g.y + py / g.sy} r="2" fill={set.color} />
            );
          })
        )}
      </g>
      {SIGNALS.map((s) => (
        <path key={`${s.x}-${s.y}`} d={`M${s.x} ${s.y - 5}l5 5h-2v5h-6v-5h-2z`} fill={s.c} />
      ))}
      <rect x="1862" y="77" width="3" height="816" fill="#e6190a" />
    </PlotSvg>
  );
}

function VolumePlot() {
  return (
    <PlotSvg viewBox="49 895 1817 143" preserveAspectRatio="none" shapeRendering="crispEdges" role="img" aria-label="거래량 지표">
      <Backdrop top={895} bottom={1038} levels={[947, 990, 1032]} />
      <polygon points={VOLUME_RIBBON.up} fill="#ff0000" />
      <polygon points={VOLUME_RIBBON.down} fill="#0000ff" />
      <g fill="none">
        <polyline points={VOL_SLOW} stroke="#0000ff" />
        <polyline points={VOL_BROWN} stroke="#993300" strokeWidth="2" />
        <polyline points={VOL_GREEN} stroke="#00ff00" strokeWidth="4" />
      </g>
    </PlotSvg>
  );
}

const TITLE = [
  "[0601] 주식종합차트", "-", "유통비율[42.3]", "거래대금[74,955(백만)]", "시가총액[2,885(억)]", "주식수[45,437(천)]",
  "유통수[19,197(천)]", "EPS[449]", "PBR[0.92]", "배당수익률[0]", "PER[14.15]", "ROA[4.0]", "유보율[3,348.5]",
  "부채비율[80.0]", "영업이익률[7.9]", "외국인보유[856(천)]", "업종[전기/전자]",
];
const LEFT_PRICES: [string, number][] = [
  ["6,660", 133], ["6,536", 244], ["6,475", 298], ["6,413", 353], ["6,352", 407], ["6,290", 462], ["6,229", 516],
  ["6,167", 571], ["6,106", 625], ["6,044", 680], ["5,983", 735], ["5,921", 789], ["5,860", 844],
];
const TIMES: [string, number][] = [
  ["09:00", 53], ["09:01", 89], ["09:02", 89], ["09:03", 89], ["09:04", 89], ["09:05", 89], ["09:06", 90], ["09:07", 89],
  ["09:08", 89], ["09:09", 89], ["09:10", 268], ["09:13", 89], ["09:14", 52], ["09:16", 104], ["09:18", 89], ["09:19", 89],
  ["09:20", 90], ["09:21", 89], ["09:22", 93],
];

const MINOR_TICKS = Array.from({ length: 41 }, (_, i) => Math.round(119 + i * 18.575) + 0.5);
const VOLUME_TICKS = [915, 923, 931, 939, 955, 965, 973, 981, 1000, 1008, 1016, 1024];

export default function App() {
  return (
    <>
      <GlobalStyle />
      <Window>
        <TitleBar>
          <WindowNo>1</WindowNo>
          <Title>{TITLE.map((t) => <span key={t}>{t}</span>)}</Title>
          <TitleTools>
            <TitleButton aria-label="화면 연결"><TGlyph d="M6 3h8v6h-8zM6 7h-4v7h7v-5" /></TitleButton>
            <TitleButton aria-label="접기"><TGlyph d="M2 12h12M2 15h12" /></TitleButton>
            <TitleButton aria-label="복사"><TGlyph d="M5 3h9v8h-9zM5 6h-3v8h8v-3" /></TitleButton>
            <TitleButton aria-label="고정"><TGlyph solid d="M5 2h6v6l2 3h-10l2-3zM8 11v5" /></TitleButton>
            <TitleButton aria-label="글꼴"><TGlyph d="M3 6v-3h10v3M8 3v11M6 14h4" /></TitleButton>
            <TitleButton aria-label="도움말"><TGlyph d="M5 6c0-4 6-4 6-1c0 3-3 2-3 6M8 13v2" /></TitleButton>
            <TitleRule />
            <TitleButton aria-label="최소화"><TGlyph d="M4 13.500h8M4 14.500h8" /></TitleButton>
            <TitleButton aria-label="이전 크기"><TGlyph d="M3 8h7v6h-7zM3 9h7M6 8v-4h7v6h-3M6 5h7" /></TitleButton>
            <TitleButton aria-label="닫기"><TGlyph d="M4 5l8 9M12 5l-8 9" /></TitleButton>
          </TitleTools>
        </TitleBar>

        <Body>
          <Toolbar>
            <Group><Key $w={18} aria-label="메뉴"><Glyph d="M6 4.500h8v9h-8M9.500 4v9M2 4v9M2 8.500h6M5 6l3 2.500-3 2.500" /></Key></Group>
            <Field $w={32}>
              <select aria-label="종목 구분" defaultValue="주"><option>주</option></select>
              <Arrow />
            </Field>
            <Group><Key $w={18}>전</Key></Group>
            <Field $w={68}>
              <input aria-label="종목코드" defaultValue="077360" />
              <Arrow />
            </Field>
            <Group><Key $w={18} aria-label="종목 검색"><svg width="16" height="18" fill="none" stroke="#606060" strokeWidth="1.500" aria-hidden="true"><circle cx="7" cy="8" r="4" /><path d="M10 11l4 4" strokeWidth="2" /></svg></Key></Group>
            <Group>
              <Key $w={16} aria-label="소리"><Glyph fill="#505050" d="M1 7h3l4-4v12l-4-4h-3zM10 6h1v6h-1zM12 7h1v1h-1zM12 10h1v1h-1z" /></Key>
              <Key $w={10} aria-label="소리 설정"><svg width="8" height="18" aria-hidden="true"><path d="M1 8h6l-3 3z" fill="#505050" /></svg></Key>
            </Group>
            <StockName><Badge>신</Badge>덕산하이메</StockName>
            <Group>{["일", "주", "월", "년"].map((t) => <Key key={t}>{t}</Key>)}</Group>
            <Group>{["분", "초", "틱"].map((t) => <Key key={t} $on={t === "초"}>{t}</Key>)}</Group>
            <Group>
              {["1", "5", "10", "60", "180", "300", "600", "3600"].map((t) => (
                <Key key={t} $on={t === "5"} $size={t.length > 3 ? 8 : t.length > 2 ? 10 : 12}>{t}</Key>
              ))}
            </Group>
            <Field $w={39}>
              <select aria-label="주기" defaultValue="5"><option>5</option></select>
              <Arrow />
            </Field>
            <Field $w={30}><input aria-label="표시 개수" defaultValue="243" /></Field>
            <Total>/5400</Total>
            <Group>
              <Key aria-label="봉 추가"><Glyph fill="#505050" d="M2 3h3v7h-3zM3 1h1v11h-1zM8 3h3v5h-3zM9 1h1v8h-1zM12 10h2v2h2v2h-2v2h-2v-2h-2v-2h2z" /></Key>
              <Key aria-label="지표 추가"><Glyph d="M1 8l4-4 5 5 5-6M1 5l4 4 5-5 4 3M10 13h6M13 10v6" /></Key>
              <Key aria-label="저장"><Glyph d="M2.500 2.500h10l2 2v11h-12zM5 2.500v4h6v-4M5 15.500v-6h7v6" /></Key>
              <Key aria-label="설정"><svg width="17" height="18" fill="none" stroke="#606060" aria-hidden="true"><circle cx="8" cy="9" r="4" strokeWidth="2" /><circle cx="8" cy="9" r="6" strokeWidth="2" strokeDasharray="2 2.700" /></svg></Key>
            </Group>
            <Check><input type="checkbox" aria-label="D" />D</Check>
          </Toolbar>

          <InfoBar>
            <Quotes>
              <QuoteCell $w={172}>
                <Value $w={73} $tone="up">6,350 ▲</Value><Value $w={48} $tone="up">660</Value><Value $w={48} $tone="up" $small>+11.60%</Value>
              </QuoteCell>
              <QuoteCell $w={170}><Value $w={69}>11,817,968</Value><Value $w={57} $tone="down" $small>93.22%</Value><Value $w={41} $small>26.01%</Value></QuoteCell>
              <QuoteCell $w={83}><Value $w={80}>74,955백만</Value></QuoteCell>
              <QuoteCell $w={139}><Value $w={40} $left>최우선</Value><Value $w={40} $tone="up">6,340</Value><Value $w={50} $tone="up">6,330</Value></QuoteCell>
              <QuoteCell $w={184}>
                <Value $w={14} $left>시</Value><Value $w={38} $tone="up">5,910</Value>
                <Value $w={20}>고</Value><Value $w={40} $tone="up">6,670</Value>
                <Value $w={20}>저</Value><Value $w={40} $tone="up">5,860</Value>
              </QuoteCell>
            </Quotes>
            <Trade $buy>매수</Trade>
            <Trade>매도</Trade>
          </InfoBar>

          <ChartFrame>
            <Pane $grow={817}>
              <AxisSvg viewBox="7 77 41 817" preserveAspectRatio="none">
                <g stroke="#000" fill="none"><rect x="12.500" y="96.500" width="13" height="13" fill="#ddd" /><path stroke="#555" d="M15 99.500h8v8h-8zM15 102.500h8M17.500 99v8M20.500 99v8" /></g>
                <g textAnchor="end">{LEFT_PRICES.map(([t, y]) => <text key={t} x="47" y={y + 5}>{t}</text>)}</g>
                <rect x="8.500" y="142.500" width="36" height="28" fill="#ffdb69" stroke="#000" />
                <text x="12" y="154">6,636</text>
                <text x="10" y="166" className="low" fill="#e6190a">16.63%</text>
                <rect x="10" y="181" width="34" height="13" fill="#e6190a" />
                <text x="12" y="192" fill="#fff">6,600</text>
                <text x="12" y="204" className="mid" fill="#e6190a">.99%</text>
              </AxisSvg>
              <Plot>
                <PricePlot />
                <Legend><i /><span>덕산하이메탈 매물대 수(13)</span></Legend>
                <Note $top={6.2} $left={81.1} $color="#e60000">최고 6,670 (-1.05%, 09:21)</Note>
                <Note $top={92.1} $left={1.2} $color="#0000e6">최저 5,860 (12.63%, 09:02)</Note>
                <Note $top={25.8} $color="#e60000">피봇2차저항선 6,490 (14.06%)</Note>
                <Note $top={69} $color="#ff00c8">피봇1차저항선 6,090 (7.03%)</Note>
                <Note $top={89.2} $color="#00e600">당일시가 5,910 (3.87%)</Note>
                <Crosshair viewBox="49 77 1817 817" preserveAspectRatio="none" shapeRendering="crispEdges" aria-hidden="true">
                  <path d="M1047.500 77V894M49 156.500H1866" stroke="#00ffff" fill="none" />
                </Crosshair>
              </Plot>
              <AxisSvg viewBox="1867 77 46 817" preserveAspectRatio="none">
                <g stroke="#909090" shapeRendering="crispEdges">
                  {MINOR_TICKS.map((y) => <path key={y} d={`M1867 ${y}h2`} />)}
                  {LEVELS.map((y) => <path key={y} d={`M1867 ${y + 0.5}h6`} />)}
                </g>
                <text x="1867" y="88" className="mid" fill="#e6190a">LC:12.63</text>
                <text x="1867" y="100" className="mid" fill="#1560c8">HC:-1.05</text>
                {LEVELS.map((y, i) => <text key={y} x="1875" y={y + 4}>{70 - i * 5}.00</text>)}
                <rect x="1870.500" y="142.500" width="41" height="28" fill="#ffdb69" stroke="#000" />
                <text x="1877" y="154">6,636</text>
                <text x="1872" y="166" className="low" fill="#e6190a">-16.63%</text>
                <rect x="1871" y="181" width="40" height="13" fill="#e6190a" />
                <text x="1875" y="192" fill="#fff">6,600</text>
                <text x="1874" y="204" className="mid" fill="#e6190a">15.99%</text>
              </AxisSvg>
            </Pane>

            <Pane $grow={143}>
              <AxisSvg viewBox="7 895 41 143" preserveAspectRatio="none">
                <g textAnchor="end" className="mid"><text x="41" y="951">1,000K</text><text x="41" y="994">00,000</text></g>
                <g stroke="#909090" shapeRendering="crispEdges">
                  {VOLUME_TICKS.map((y) => <path key={y} d={`M46 ${y + 0.5}h2`} />)}
                  {[947, 990, 1032].map((y) => <path key={y} d={`M42 ${y + 0.5}h6`} />)}
                </g>
              </AxisSvg>
              <Plot>
                <VolumePlot />
                <Crosshair viewBox="49 895 1817 143" preserveAspectRatio="none" shapeRendering="crispEdges" aria-hidden="true">
                  <path d="M1047.500 895V1038" stroke="#00ffff" />
                </Crosshair>
              </Plot>
              <AxisSvg viewBox="1867 895 46 143" preserveAspectRatio="none">
                <g stroke="#909090" shapeRendering="crispEdges">
                  {VOLUME_TICKS.map((y) => <path key={y} d={`M1867 ${y + 0.5}h2`} />)}
                  {[947, 990, 1032].map((y) => <path key={y} d={`M1867 ${y + 0.5}h6`} />)}
                </g>
                <text x="1875" y="951" className="mid">1,000K</text>
                <text x="1875" y="994" className="low">500,000</text>
                <rect x="1903" y="898" width="8" height="7" fill="#303030" />
                <path d="M1905 900l4 3M1909 900l-4 3" stroke="#fff" />
              </AxisSvg>
            </Pane>

            <TimeAxis>
              {TIMES.map(([t, w]) => <Tick key={t} $span={w}>{t}</Tick>)}
              <LastTick>09:22:5</LastTick>
              <TimeTip>2025/09/18(목) 09:11:35</TimeTip>
            </TimeAxis>
          </ChartFrame>

          <Bottom>
            <Bevel aria-label="왼쪽으로"><svg width="14" height="15" aria-hidden="true"><path d="M9 4v8l-4-4z" /></svg></Bevel>
            <Track><Gap $grow={432} /><Thumb /><Gap $grow={1022} /></Track>
            <Bevel aria-label="재생"><svg width="14" height="15" aria-hidden="true"><path d="M5 4v8l4-4z" /></svg></Bevel>
            <Bevel aria-label="뒤로"><svg width="14" height="15" aria-hidden="true"><path d="M6 4v8l-4-4zM11 4v8l-4-4z" /></svg></Bevel>
            <Bevel aria-label="정지"><svg width="14" height="15" aria-hidden="true"><path d="M4 5h6v6h-6z" /></svg></Bevel>
            <Bevel aria-label="앞으로"><svg width="14" height="15" aria-hidden="true"><path d="M3 4v8l4-4zM8 4v8l4-4z" /></svg></Bevel>
            <Speed><input type="range" min="0" max="10" defaultValue="1" aria-label="재생 속도" /><SpeedMarks /></Speed>
            <Tool aria-label="창 추가"><Glyph d="M2.500 2.500h9v7M2.500 2.500v9h5M8.500 9.500h7v6h-7zM12 9.500v6M8.500 12.500h7" /></Tool>
            <Tool aria-label="창 분리"><Glyph d="M8 9.500h-5.500v-7h9v4M6.500 6.500h9v8h-9zM6.500 8.500h9" /></Tool>
            <Tool aria-label="영역"><Glyph d="M1 3.500h2m2 0h2m2 0h2m2 0h2M1 14.500h2m2 0h2m2 0h2m2 0h2M2 11l4-3 3 2 5-4" /></Tool>
            <Tool $on aria-label="십자선"><Glyph d="M4.500 2v13M1 4.500h15M7 7l5 6M7 7v5M7 7h5" /></Tool>
            <Tool aria-label="수평선"><Glyph d="M1 4.500h15M1 12l3-1 4-5 3 6 2-4 2 2" /></Tool>
            <Tool aria-label="수직선"><Glyph d="M5.500 2v13M1 12l3-1 4-5 3 6 2-4 2 2" /></Tool>
            <Tool aria-label="추세선"><Glyph d="M2 15l9-13M1 12l3-1 4-5 3 6 2-4 2 2" /></Tool>
            <Tool aria-label="모두 지우기"><Glyph d="M1.500 9l6-6h4v3l-5 6h-5zM1.500 9h5v3M6.500 9l5-6M9 16v-5l2 0v5M13.500 11v5M15.500 11v5" /></Tool>
            <Tool aria-label="차트 저장"><Glyph d="M5.500 2.500h10v8h-3M1.500 6.500h10v9h-10zM3 13l3-3 2 2 3-3M7 5l3-1 2 1 3-2" /></Tool>
            <Tool aria-label="돋보기"><svg width="17" height="17" fill="none" stroke="#606060" strokeWidth="1.500" aria-hidden="true"><circle cx="7" cy="7" r="5" /><path d="M10 11l5 5" strokeWidth="2" /></svg></Tool>
            <Tool aria-label="축소"><Glyph fill="#505050" d="M4 8h9v2h-9z" /></Tool>
            <Tool aria-label="확대"><Glyph fill="#505050" d="M4 8h4v-4h2v4h4v2h-4v4h-2v-4h-4z" /></Tool>
            <Tool aria-label="자동"><b>A</b></Tool>
          </Bottom>
        </Body>
      </Window>
    </>
  );
}
